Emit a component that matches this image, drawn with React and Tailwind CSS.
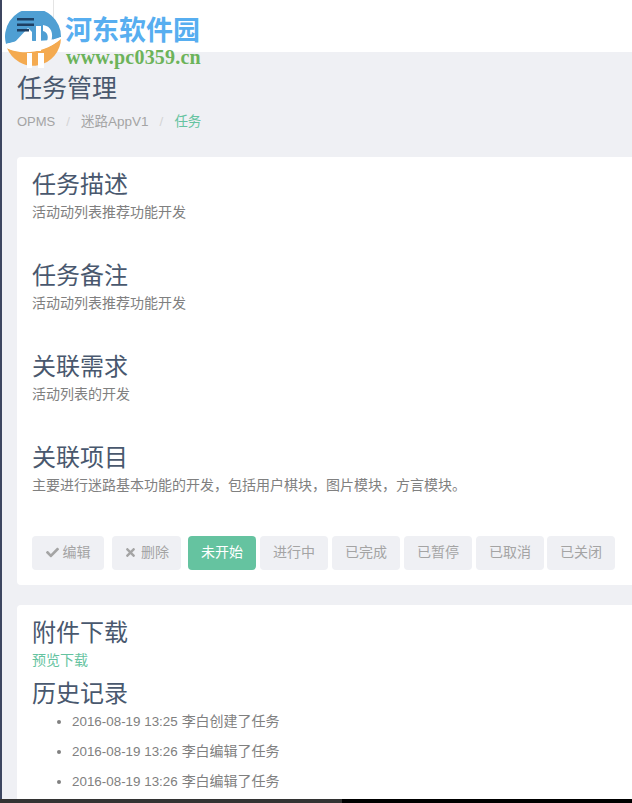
import { FaCheck, FaTimes } from "react-icons/fa";

const cjk = "font-['Liberation_Sans','Noto_Sans_CJK_SC',sans-serif]";

function Section({ title, desc, className }) {
  return (
    <div className={className}>
      <h3 className="text-[24px] leading-[30px] text-[#49586e]">{title}</h3>
      <p className="mt-[2px] text-[14px] leading-[20px] text-[#808080]">{desc}</p>
    </div>
  );
}

function Btn({ children, active, className }) {
  return (
    <button
      className={`flex h-[34px] shrink-0 items-center justify-center gap-[4px] rounded-[4px] pb-[2px] text-[14px] ${
        active ? "bg-[#65c3a0] text-white" : "bg-[#eff0f4] text-[#a4a4a4]"
      } ${className}`}
    >
      {children}
    </button>
  );
}

function Logo() {
  return (
    <div className="absolute left-[5px] top-[11px] h-[57px] w-[57px]">
      <svg width="57" height="57" viewBox="0 0 57 57">
        {/* blue dome */}
        <path d="M1 33A28 28 0 1 1 56 26C48 29 38 30 28 30C18 30 8 31 1 33Z" fill="#4f9fd3" />
        {/* orange crescent */}
        <path d="M2 37C12 43 38 45 56 27A28 28 0 0 1 2 37Z" fill="#f4aa50" />
        {/* swoosh */}
        <path d="M1 33C12 30 20 27 28 30C38 32 48 30 56 26L56 28C40 42 14 43 2 37Z" fill="#ffffff" />
        {/* house */}
        <path d="M9 32L23 17L27 21V38H14V31Z" fill="#ffffff" />
        {/* pillar and D */}
        <rect x="31" y="15" width="5" height="25" fill="#ffffff" />
        <path d="M38 14C46 15 49 22 46 31L42 30C44 25 42 21 38 20Z" fill="#ffffff" />
        {/* columns in the orange part */}
        <rect x="22" y="42" width="5" height="15" fill="#ffffff" />
        <rect x="33" y="42" width="6" height="15" fill="#ffffff" />
        {/* menu bars */}
        <rect x="12" y="7" width="17" height="2.5" fill="#1d3f63" />
        <rect x="12" y="12.5" width="17" height="2.5" fill="#1d3f63" />
        <rect x="12" y="18" width="12" height="2.5" fill="#1d3f63" />
      </svg>
    </div>
  );
}

function HistoryItem({ time, text }) {
  return (
    <li className="h-[30px] leading-[30px]">
      <span className="text-[13.4px]">{time}</span> {text}
    </li>
  );
}

export default function App() {
  return (
    <div className={`relative flex h-[803px] w-[632px] flex-col overflow-hidden bg-[#eff0f4] ${cjk}`}>
      <div className="flex min-h-0 flex-1 overflow-hidden">
        <div className="w-[2px] shrink-0 bg-[#3d4660]" />
        <div className="min-w-0 flex-1">
          <header className="flex h-[52px] bg-white">
            <div className="w-[52px] border-r border-[#e4e4e4]" />
          </header>

          <div className="pl-[15px]">
            <h2 className="mt-[19px] text-[25px] leading-[34px] text-[#49586e]">任务管理</h2>
            <div className="mt-[7px] flex h-[20px] items-center text-[13.5px] text-[#a4a4a4]">
              <span className="text-[13px]">OPMS</span>
              <span className="mx-[11px] text-[#d4d4d4]">/</span>
              <span>迷路AppV1</span>
              <span className="mx-[11px] text-[#d4d4d4]">/</span>
              <span className="text-[#65c3a0]">任务</span>
            </div>

            <section className="mt-[25px] rounded-l-[4px] bg-white pb-[15px] pl-[15px] pt-[13px]">
              <Section title="任务描述" desc="活动动列表推荐功能开发" />
              <Section className="mt-[39px]" title="任务备注" desc="活动动列表推荐功能开发" />
              <Section className="mt-[39px]" title="关联需求" desc="活动列表的开发" />
              <Section className="mt-[39px]" title="关联项目" desc="主要进行迷路基本功能的开发，包括用户棋块，图片模块，方言模块。" />

              <div className="mt-[41px] flex">
                <Btn className="w-[72px]">
                  <FaCheck size={13} className="text-[#a4a4a4]" />
                  编辑
                </Btn>
                <Btn className="ml-[8px] w-[69px]">
                  <FaTimes size={13} className="text-[#a4a4a4]" />
                  删除
                </Btn>
                <Btn active className="ml-[7px] w-[68px]">未开始</Btn>
                <Btn className="ml-[4px] w-[68px]">进行中</Btn>
                <Btn className="ml-[4px] w-[68px]">已完成</Btn>
                <Btn className="ml-[4px] w-[68px]">已暂停</Btn>
                <Btn className="ml-[4px] w-[68px]">已取消</Btn>
                <Btn className="ml-[3px] w-[68px]">已关闭</Btn>
              </div>
            </section>

            <section className="mt-[20px] rounded-l-[4px] bg-white pb-[20px] pl-[15px] pt-[13px]">
              <h3 className="text-[24px] leading-[30px] text-[#49586e]">附件下载</h3>
              <a className="mt-[2px] block text-[14px] leading-[20px] text-[#65c3a0]">预览下载</a>
              <h3 className="mt-[9px] text-[24px] leading-[30px] text-[#49586e]">历史记录</h3>
              <ul className="-mt-[3px] list-disc pl-[40px] text-[14px] text-[#808080]">
                <HistoryItem time="2016-08-19 13:25" text="李白创建了任务" />
                <HistoryItem time="2016-08-19 13:26" text="李白编辑了任务" />
                <HistoryItem time="2016-08-19 13:26" text="李白编辑了任务" />
              </ul>
            </section>
          </div>
        </div>
      </div>

      <div className="flex h-[4px] shrink-0">
        <div className="w-[342px] bg-[#333333]" />
        <div className="flex-1 bg-black" />
      </div>

      <Logo />
      <div className="absolute left-[65px] top-[12px] font-['Noto_Sans_CJK_SC',serif] text-[27px] font-bold leading-[34px] text-[#57aef0]">
        河东软件园
      </div>
      <div className="absolute left-[66px] top-[47px] font-['Liberation_Serif',serif] text-[20px] font-bold leading-[20px] tracking-[0.2px] text-[#6cb35a]">
        www.pc0359.cn
      </div>
    </div>
  );
}
